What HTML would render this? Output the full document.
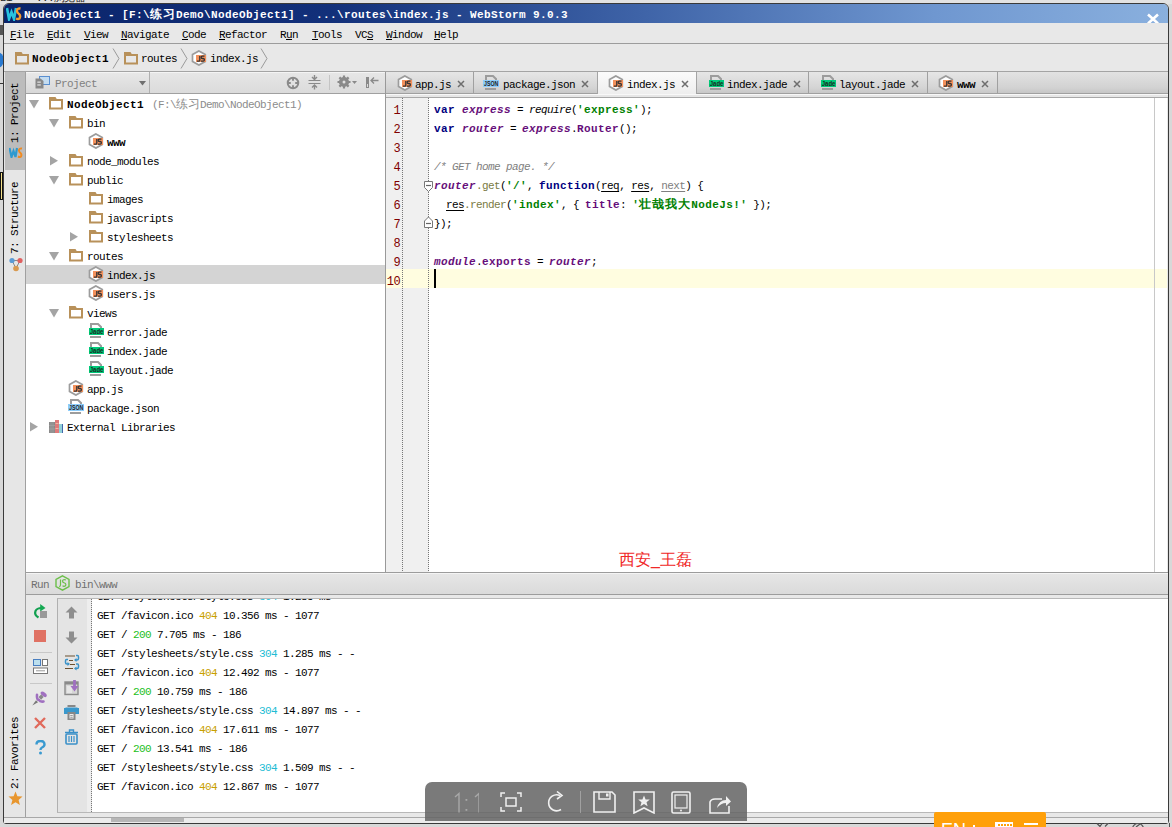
<!DOCTYPE html>
<html><head><meta charset="utf-8">
<style>
*{box-sizing:border-box;margin:0;padding:0}
html,body{width:1172px;height:827px;overflow:hidden}
body{position:relative;background:#d8d8d8;font-family:"Liberation Mono",monospace;font-size:12px;color:#000}
.a{position:absolute}
.t{position:absolute;white-space:pre;font-size:11px;letter-spacing:-0.6px;line-height:12px}
.b{font-weight:bold;letter-spacing:0.4px}
.i{font-style:italic}
u{text-decoration:underline;text-underline-offset:1px}
</style></head><body>
<div class="a" style="left:0px;top:0px;width:1172px;height:4px;background:#e2e2e2"></div>
<div class="t" style="left:0px;top:-8px;color:#222">Bi    ...浏览器</div>
<div class="a" style="left:-10px;top:52px;width:14px;height:16px;border-radius:50%;background:#2a7ad0"></div>
<div class="a" style="left:0px;top:25px;width:3px;height:10px;background:#555"></div>
<div class="a" style="left:0px;top:172px;width:3px;height:28px;background:#f4e08a;border:1px solid #111"></div>
<div class="a" style="left:0px;top:83px;width:3px;height:1px;background:#333"></div>
<div class="a" style="left:3px;top:3px;width:1166px;height:821px;background:#e8e8e8;border:1px solid #3a3a3a;border-radius:6px 6px 3px 3px"></div>
<div class="a" style="left:4px;top:4px;width:1164px;height:19px;background:linear-gradient(90deg,#0a246a 0%,#12307a 28%,#3f64a8 55%,#6f97d0 80%,#8ab0de 100%);border-radius:5px 5px 0 0"></div>
<svg class="a" style="left:6px;top:6px;" width="16" height="15" viewBox="0 0 16 15"><path d="M1 2 L3 13 L5.5 6 L8 13 L10 2" fill="none" stroke="#27c3e0" stroke-width="2.6"/><path d="M14.5 2.5 Q11 2 11 5 Q11 7 13 8 Q15 9.5 13.5 12.5 Q12 13.5 10 12.5" fill="none" stroke="#f59b2e" stroke-width="2.4"/></svg>
<div class="t b" style="left:24px;top:9px;color:#fff">NodeObject1 - [F:\<span style="font-size:12px;letter-spacing:1px">练习</span>Demo\NodeObject1] - ...\routes\index.js - WebStorm 9.0.3</div>
<svg class="a" style="left:1146px;top:13px;" width="14" height="12" viewBox="0 0 14 12"><path d="M2 1.5 L12 10.5 M12 1.5 L2 10.5" stroke="#fff" stroke-width="2.6"/></svg>
<div class="a" style="left:4px;top:23px;width:1164px;height:21px;background:#e8e8e8;border-bottom:1px solid #9c9c9c"></div>
<div class="t" style="left:10px;top:29px;"><u>F</u>ile</div>
<div class="t" style="left:47px;top:29px;"><u>E</u>dit</div>
<div class="t" style="left:84px;top:29px;"><u>V</u>iew</div>
<div class="t" style="left:121px;top:29px;"><u>N</u>avigate</div>
<div class="t" style="left:182px;top:29px;"><u>C</u>ode</div>
<div class="t" style="left:219px;top:29px;"><u>R</u>efactor</div>
<div class="t" style="left:280px;top:29px;">R<u>u</u>n</div>
<div class="t" style="left:312px;top:29px;"><u>T</u>ools</div>
<div class="t" style="left:355px;top:29px;">VC<u>S</u></div>
<div class="t" style="left:386px;top:29px;"><u>W</u>indow</div>
<div class="t" style="left:434px;top:29px;"><u>H</u>elp</div>
<div class="a" style="left:4px;top:44px;width:1164px;height:28px;background:#e8e8e8;border-bottom:1px solid #a4a4a4"></div>
<svg class="a" style="left:15px;top:52px;" width="15" height="13" viewBox="0 0 15 13"><path d="M0 0 H6.5 L8 2.5 H0 Z" fill="#b8915a"/><rect x="1" y="3" width="12" height="8.5" fill="none" stroke="#b8915a" stroke-width="2"/></svg>
<div class="t b" style="left:32px;top:53px;">NodeObject1</div>
<svg class="a" style="left:112px;top:48px;" width="8" height="21" viewBox="0 0 8 21"><path d="M1 0.5 L7 10.5 L1 20.5" fill="none" stroke="#9a9a9a" stroke-width="1"/></svg>
<svg class="a" style="left:124px;top:52px;" width="15" height="13" viewBox="0 0 15 13"><path d="M0 0 H6.5 L8 2.5 H0 Z" fill="#b8915a"/><rect x="1" y="3" width="12" height="8.5" fill="none" stroke="#b8915a" stroke-width="2"/></svg>
<div class="t" style="left:141px;top:53px;">routes</div>
<svg class="a" style="left:180px;top:48px;" width="8" height="21" viewBox="0 0 8 21"><path d="M1 0.5 L7 10.5 L1 20.5" fill="none" stroke="#9a9a9a" stroke-width="1"/></svg>
<svg class="a" style="left:191px;top:50px;" width="16" height="16" viewBox="0 0 16 16"><path d="M7.9 0.9 L14.3 4.5 V11.5 L7.9 15.1 L1.5 11.5 V4.5 Z" fill="#fff" stroke="#9c9c9c" stroke-width="1.7"/><rect x="5" y="5" width="10" height="7" fill="#f3915c"/><path d="M8.8 6 V10.3 Q8.8 11.2 7.8 11.2 H6" fill="none" stroke="#333" stroke-width="1.3"/><path d="M13.5 6.2 H11.2 Q10.2 6.2 10.2 7.3 Q10.2 8.5 11.3 8.5 H12.2 Q13.4 8.5 13.4 9.8 Q13.4 11.1 12.2 11.1 H10" fill="none" stroke="#333" stroke-width="1.3"/></svg>
<div class="t" style="left:210px;top:53px;">index.js</div>
<svg class="a" style="left:260px;top:48px;" width="8" height="21" viewBox="0 0 8 21"><path d="M1 0.5 L7 10.5 L1 20.5" fill="none" stroke="#9a9a9a" stroke-width="1"/></svg>
<div class="a" style="left:4px;top:72px;width:22px;height:745px;background:#e6e6e6;border-right:1px solid #a0a0a0"></div>
<div class="a" style="left:5px;top:72px;width:20px;height:98px;background:#bcbcbc"></div>
<div class="t" style="left:9px;top:143px;font-size:11px;letter-spacing:-0.6px;transform-origin:0 0;transform:rotate(-90deg)">1: Project</div>
<svg class="a" style="left:9px;top:147px;" width="14" height="11" viewBox="0 0 14 11"><path d="M0.5 1 L2.5 10 L4.5 4 L6.5 10 L8 1" fill="none" stroke="#2e9ad0" stroke-width="2.2"/><path d="M13 1.5 Q10 1 10 3.5 Q10 5 11.5 6 Q13 7.2 12 9.5 Q11 10.5 9 9.5" fill="none" stroke="#f08a20" stroke-width="2"/></svg>
<div class="t" style="left:9px;top:254px;font-size:11px;letter-spacing:-0.6px;transform-origin:0 0;transform:rotate(-90deg)">7: Structure</div>
<svg class="a" style="left:9px;top:257px;" width="14" height="15" viewBox="0 0 14 15"><path d="M3 3.5 L11 3.5 L7 11.5 Z" fill="none" stroke="#888" stroke-width="1"/><circle cx="3" cy="3.5" r="2.6" fill="#5b9bd5"/><circle cx="11" cy="3.5" r="2.6" fill="#e06060"/><circle cx="7" cy="11.5" r="2.8" fill="#d99a50"/></svg>
<div class="t" style="left:9px;top:789px;font-size:11px;letter-spacing:-0.6px;transform-origin:0 0;transform:rotate(-90deg)">2: Favorites</div>
<svg class="a" style="left:8px;top:791px;" width="15" height="15" viewBox="0 0 15 15"><path d="M7.5 0.5 L9.4 5.3 L14.5 5.6 L10.6 8.9 L11.9 14 L7.5 11.2 L3.1 14 L4.4 8.9 L0.5 5.6 L5.6 5.3 Z" fill="#e8962e"/></svg>
<div class="a" style="left:26px;top:72px;width:360px;height:22px;background:linear-gradient(#f4f4f4 0 1px,#e6e6e6 1px,#dbdbdb);border-bottom:1px solid #a0a0a0"></div>
<div class="a" style="left:26px;top:72px;width:124px;height:21px;background:linear-gradient(#f4f4f4 0 1px,#e8e8e8 1px,#d8d8d8);border-right:1px solid #b0b0b0"></div>
<svg class="a" style="left:35px;top:76px;" width="16" height="13" viewBox="0 0 16 13"><rect x="4.5" y="0.5" width="10" height="8" fill="#c4dcf0" stroke="#5a8fd0" stroke-width="1"/><path d="M0.5 2.5 H5.5 L8.5 5 V12.5 H0.5 Z" fill="#888"/><rect x="2.3" y="5.5" width="3.5" height="1.3" fill="#ddd"/><rect x="2.3" y="8.3" width="3.5" height="1.3" fill="#ddd"/></svg>
<div class="t" style="left:55px;top:78px;color:#808080">Project</div>
<svg class="a" style="left:139px;top:81px;" width="8" height="5" viewBox="0 0 8 5"><path d="M0 0 H7 L3.5 4.5 Z" fill="#707070"/></svg>
<svg class="a" style="left:286px;top:76px;" width="14" height="14" viewBox="0 0 14 14"><circle cx="7" cy="7" r="5.3" fill="none" stroke="#8a8a8a" stroke-width="1.9"/><path d="M7 2 V4.8 M7 9.2 V12 M2 7 H4.8 M9.2 7 H12" stroke="#8a8a8a" stroke-width="1.9"/></svg>
<svg class="a" style="left:308px;top:75px;" width="13" height="15" viewBox="0 0 13 15"><path d="M0.5 5.5 H12.5 M0.5 8.5 H12.5" stroke="#8a8a8a" stroke-width="1.2"/><path d="M6.5 0 V4 M4 2 L6.5 4.5 L9 2 M6.5 14.5 V10 M4 12.5 L6.5 10 L9 12.5" fill="none" stroke="#8a8a8a" stroke-width="1.4"/></svg>
<div class="a" style="left:329px;top:75px;width:1px;height:15px;background:#c4c4c4"></div>
<svg class="a" style="left:337px;top:75px;" width="21" height="14" viewBox="0 0 21 14"><circle cx="7" cy="7" r="3.6" fill="none" stroke="#8a8a8a" stroke-width="3"/><path d="M7 0.5 V13.5 M0.5 7 H13.5 M2.4 2.4 L11.6 11.6 M11.6 2.4 L2.4 11.6" stroke="#8a8a8a" stroke-width="2.2"/><circle cx="7" cy="7" r="1.5" fill="#e0e0e0"/><path d="M15 6 H20 L17.5 9 Z" fill="#8a8a8a"/></svg>
<svg class="a" style="left:365px;top:76px;" width="14" height="13" viewBox="0 0 14 13"><rect x="1" y="1" width="3" height="11" fill="#8a8a8a"/><rect x="2" y="8" width="1" height="3" fill="#ddd"/><path d="M6 4.5 H13.5 M9 1.5 L6 4.5 L9 7.5" fill="none" stroke="#8a8a8a" stroke-width="1.3"/></svg>
<div class="a" style="left:26px;top:94px;width:359px;height:478px;background:#fff"></div>
<div class="a" style="left:385px;top:72px;width:1px;height:501px;background:#999"></div>
<div class="a" style="left:26px;top:265px;width:359px;height:19px;background:#d4d4d4"></div>
<svg class="a" style="left:29px;top:100px;" width="10" height="9" viewBox="0 0 10 9"><path d="M0 0 H10 L5 8.5 Z" fill="#a4a4a4"/></svg>
<svg class="a" style="left:49px;top:97px;" width="15" height="13" viewBox="0 0 15 13"><path d="M0 0 H6.5 L8 2.5 H0 Z" fill="#b8915a"/><rect x="1" y="3" width="12" height="8.5" fill="none" stroke="#b8915a" stroke-width="2"/></svg>
<div class="t b" style="left:67px;top:99px;">NodeObject1</div>
<div class="t" style="left:152px;top:99px;color:#8c8c8c">(F:\<span style="font-size:12px;letter-spacing:0px">练习</span>Demo\NodeObject1)</div>
<svg class="a" style="left:49px;top:119px;" width="10" height="9" viewBox="0 0 10 9"><path d="M0 0 H10 L5 8.5 Z" fill="#a4a4a4"/></svg>
<svg class="a" style="left:69px;top:116px;" width="15" height="13" viewBox="0 0 15 13"><path d="M0 0 H6.5 L8 2.5 H0 Z" fill="#b8915a"/><rect x="1" y="3" width="12" height="8.5" fill="none" stroke="#b8915a" stroke-width="2"/></svg>
<div class="t" style="left:87px;top:118px;">bin</div>
<svg class="a" style="left:88px;top:133px;" width="16" height="16" viewBox="0 0 16 16"><path d="M7.9 0.9 L14.3 4.5 V11.5 L7.9 15.1 L1.5 11.5 V4.5 Z" fill="#fff" stroke="#9c9c9c" stroke-width="1.7"/><rect x="5" y="5" width="10" height="7" fill="#f3915c"/><path d="M8.8 6 V10.3 Q8.8 11.2 7.8 11.2 H6" fill="none" stroke="#333" stroke-width="1.3"/><path d="M13.5 6.2 H11.2 Q10.2 6.2 10.2 7.3 Q10.2 8.5 11.3 8.5 H12.2 Q13.4 8.5 13.4 9.8 Q13.4 11.1 12.2 11.1 H10" fill="none" stroke="#333" stroke-width="1.3"/></svg>
<div class="t b" style="left:107px;top:137px;letter-spacing:-0.6px">www</div>
<svg class="a" style="left:50px;top:156px;" width="9" height="10" viewBox="0 0 9 10"><path d="M0 0 V9.5 L8 4.75 Z" fill="#a4a4a4"/></svg>
<svg class="a" style="left:69px;top:154px;" width="15" height="13" viewBox="0 0 15 13"><path d="M0 0 H6.5 L8 2.5 H0 Z" fill="#b8915a"/><rect x="1" y="3" width="12" height="8.5" fill="none" stroke="#b8915a" stroke-width="2"/></svg>
<div class="t" style="left:87px;top:156px;">node_modules</div>
<svg class="a" style="left:49px;top:176px;" width="10" height="9" viewBox="0 0 10 9"><path d="M0 0 H10 L5 8.5 Z" fill="#a4a4a4"/></svg>
<svg class="a" style="left:69px;top:173px;" width="15" height="13" viewBox="0 0 15 13"><path d="M0 0 H6.5 L8 2.5 H0 Z" fill="#b8915a"/><rect x="1" y="3" width="12" height="8.5" fill="none" stroke="#b8915a" stroke-width="2"/></svg>
<div class="t" style="left:87px;top:175px;">public</div>
<svg class="a" style="left:89px;top:192px;" width="15" height="13" viewBox="0 0 15 13"><path d="M0 0 H6.5 L8 2.5 H0 Z" fill="#b8915a"/><rect x="1" y="3" width="12" height="8.5" fill="none" stroke="#b8915a" stroke-width="2"/></svg>
<div class="t" style="left:107px;top:194px;">images</div>
<svg class="a" style="left:89px;top:211px;" width="15" height="13" viewBox="0 0 15 13"><path d="M0 0 H6.5 L8 2.5 H0 Z" fill="#b8915a"/><rect x="1" y="3" width="12" height="8.5" fill="none" stroke="#b8915a" stroke-width="2"/></svg>
<div class="t" style="left:107px;top:213px;">javascripts</div>
<svg class="a" style="left:70px;top:232px;" width="9" height="10" viewBox="0 0 9 10"><path d="M0 0 V9.5 L8 4.75 Z" fill="#a4a4a4"/></svg>
<svg class="a" style="left:89px;top:230px;" width="15" height="13" viewBox="0 0 15 13"><path d="M0 0 H6.5 L8 2.5 H0 Z" fill="#b8915a"/><rect x="1" y="3" width="12" height="8.5" fill="none" stroke="#b8915a" stroke-width="2"/></svg>
<div class="t" style="left:107px;top:232px;">stylesheets</div>
<svg class="a" style="left:49px;top:252px;" width="10" height="9" viewBox="0 0 10 9"><path d="M0 0 H10 L5 8.5 Z" fill="#a4a4a4"/></svg>
<svg class="a" style="left:69px;top:249px;" width="15" height="13" viewBox="0 0 15 13"><path d="M0 0 H6.5 L8 2.5 H0 Z" fill="#b8915a"/><rect x="1" y="3" width="12" height="8.5" fill="none" stroke="#b8915a" stroke-width="2"/></svg>
<div class="t" style="left:87px;top:251px;">routes</div>
<svg class="a" style="left:88px;top:266px;" width="16" height="16" viewBox="0 0 16 16"><path d="M7.9 0.9 L14.3 4.5 V11.5 L7.9 15.1 L1.5 11.5 V4.5 Z" fill="#fff" stroke="#9c9c9c" stroke-width="1.7"/><rect x="5" y="5" width="10" height="7" fill="#f3915c"/><path d="M8.8 6 V10.3 Q8.8 11.2 7.8 11.2 H6" fill="none" stroke="#333" stroke-width="1.3"/><path d="M13.5 6.2 H11.2 Q10.2 6.2 10.2 7.3 Q10.2 8.5 11.3 8.5 H12.2 Q13.4 8.5 13.4 9.8 Q13.4 11.1 12.2 11.1 H10" fill="none" stroke="#333" stroke-width="1.3"/></svg>
<div class="t" style="left:107px;top:270px;">index.js</div>
<svg class="a" style="left:88px;top:285px;" width="16" height="16" viewBox="0 0 16 16"><path d="M7.9 0.9 L14.3 4.5 V11.5 L7.9 15.1 L1.5 11.5 V4.5 Z" fill="#fff" stroke="#9c9c9c" stroke-width="1.7"/><rect x="5" y="5" width="10" height="7" fill="#f3915c"/><path d="M8.8 6 V10.3 Q8.8 11.2 7.8 11.2 H6" fill="none" stroke="#333" stroke-width="1.3"/><path d="M13.5 6.2 H11.2 Q10.2 6.2 10.2 7.3 Q10.2 8.5 11.3 8.5 H12.2 Q13.4 8.5 13.4 9.8 Q13.4 11.1 12.2 11.1 H10" fill="none" stroke="#333" stroke-width="1.3"/></svg>
<div class="t" style="left:107px;top:289px;">users.js</div>
<svg class="a" style="left:49px;top:309px;" width="10" height="9" viewBox="0 0 10 9"><path d="M0 0 H10 L5 8.5 Z" fill="#a4a4a4"/></svg>
<svg class="a" style="left:69px;top:306px;" width="15" height="13" viewBox="0 0 15 13"><path d="M0 0 H6.5 L8 2.5 H0 Z" fill="#b8915a"/><rect x="1" y="3" width="12" height="8.5" fill="none" stroke="#b8915a" stroke-width="2"/></svg>
<div class="t" style="left:87px;top:308px;">views</div>
<svg class="a" style="left:89px;top:323px;" width="16" height="16" viewBox="0 0 16 16"><path d="M2 5 V1 H9 L12 4 V5" fill="none" stroke="#9c9c9c" stroke-width="2"/><path d="M1 14 H12" fill="none" stroke="#9c9c9c" stroke-width="2"/><rect x="0" y="5" width="15" height="7" fill="#00c97a"/><text x="0.8" y="11.4" font-size="7.8" font-family="Liberation Sans" font-weight="bold" fill="#1a2a20" textLength="13.6" lengthAdjust="spacingAndGlyphs">Jade</text></svg>
<div class="t" style="left:107px;top:327px;">error.jade</div>
<svg class="a" style="left:89px;top:342px;" width="16" height="16" viewBox="0 0 16 16"><path d="M2 5 V1 H9 L12 4 V5" fill="none" stroke="#9c9c9c" stroke-width="2"/><path d="M1 14 H12" fill="none" stroke="#9c9c9c" stroke-width="2"/><rect x="0" y="5" width="15" height="7" fill="#00c97a"/><text x="0.8" y="11.4" font-size="7.8" font-family="Liberation Sans" font-weight="bold" fill="#1a2a20" textLength="13.6" lengthAdjust="spacingAndGlyphs">Jade</text></svg>
<div class="t" style="left:107px;top:346px;">index.jade</div>
<svg class="a" style="left:89px;top:361px;" width="16" height="16" viewBox="0 0 16 16"><path d="M2 5 V1 H9 L12 4 V5" fill="none" stroke="#9c9c9c" stroke-width="2"/><path d="M1 14 H12" fill="none" stroke="#9c9c9c" stroke-width="2"/><rect x="0" y="5" width="15" height="7" fill="#00c97a"/><text x="0.8" y="11.4" font-size="7.8" font-family="Liberation Sans" font-weight="bold" fill="#1a2a20" textLength="13.6" lengthAdjust="spacingAndGlyphs">Jade</text></svg>
<div class="t" style="left:107px;top:365px;">layout.jade</div>
<svg class="a" style="left:68px;top:380px;" width="16" height="16" viewBox="0 0 16 16"><path d="M7.9 0.9 L14.3 4.5 V11.5 L7.9 15.1 L1.5 11.5 V4.5 Z" fill="#fff" stroke="#9c9c9c" stroke-width="1.7"/><rect x="5" y="5" width="10" height="7" fill="#f3915c"/><path d="M8.8 6 V10.3 Q8.8 11.2 7.8 11.2 H6" fill="none" stroke="#333" stroke-width="1.3"/><path d="M13.5 6.2 H11.2 Q10.2 6.2 10.2 7.3 Q10.2 8.5 11.3 8.5 H12.2 Q13.4 8.5 13.4 9.8 Q13.4 11.1 12.2 11.1 H10" fill="none" stroke="#333" stroke-width="1.3"/></svg>
<div class="t" style="left:87px;top:384px;">app.js</div>
<svg class="a" style="left:68px;top:399px;" width="17" height="16" viewBox="0 0 17 16"><path d="M3 5 V1 H10 L13 4 V5" fill="none" stroke="#9c9c9c" stroke-width="2"/><path d="M2 14 H13" fill="none" stroke="#9c9c9c" stroke-width="2"/><rect x="0" y="5" width="16" height="7" fill="#8dcdfb"/><text x="1" y="11.4" font-size="7.8" font-family="Liberation Sans" font-weight="bold" fill="#222" textLength="14.2" lengthAdjust="spacingAndGlyphs">JSON</text></svg>
<div class="t" style="left:87px;top:403px;">package.json</div>
<svg class="a" style="left:30px;top:422px;" width="9" height="10" viewBox="0 0 9 10"><path d="M0 0 V9.5 L8 4.75 Z" fill="#a4a4a4"/></svg>
<svg class="a" style="left:49px;top:420px;" width="15" height="14" viewBox="0 0 15 14"><rect x="0" y="2" width="6" height="11" fill="#8a8a8a"/><path d="M0 5.5 H6 M0 9 H6 M2 2 V13 M4 2 V13" stroke="#a8a8a8" stroke-width="0.6"/><rect x="6" y="0" width="4" height="13" fill="#e07a7a"/><path d="M6.5 3.5 H9.5 M6.5 8.5 H9.5" stroke="#f0c8b0" stroke-width="0.8"/><rect x="10" y="4" width="4" height="9" fill="#8fcfd8"/><rect x="13" y="4" width="1" height="9" fill="#4466aa"/></svg>
<div class="t" style="left:67px;top:422px;">External Libraries</div>
<div class="a" style="left:386px;top:72px;width:782px;height:22px;background:linear-gradient(#e2e2e2,#d2d2d2 75%,#c6c6c6);border-bottom:1px solid #a0a0a0"></div>
<div class="a" style="left:386px;top:72px;width:88px;height:22px;background:linear-gradient(#e6e6e6,#d4d4d4 75%,#c8c8c8);border-right:1px solid #a0a0a0;border-bottom:1px solid #a0a0a0"></div>
<svg class="a" style="left:397px;top:75px;" width="16" height="16" viewBox="0 0 16 16"><path d="M7.9 0.9 L14.3 4.5 V11.5 L7.9 15.1 L1.5 11.5 V4.5 Z" fill="#fff" stroke="#9c9c9c" stroke-width="1.7"/><rect x="5" y="5" width="10" height="7" fill="#f3915c"/><path d="M8.8 6 V10.3 Q8.8 11.2 7.8 11.2 H6" fill="none" stroke="#333" stroke-width="1.3"/><path d="M13.5 6.2 H11.2 Q10.2 6.2 10.2 7.3 Q10.2 8.5 11.3 8.5 H12.2 Q13.4 8.5 13.4 9.8 Q13.4 11.1 12.2 11.1 H10" fill="none" stroke="#333" stroke-width="1.3"/></svg>
<div class="t" style="left:415px;top:79px;">app.js</div>
<svg class="a" style="left:457px;top:80px;" width="8" height="8" viewBox="0 0 8 8"><path d="M1 1 L7 7 M7 1 L1 7" stroke="#6e6e6e" stroke-width="1.5"/></svg>
<div class="a" style="left:474px;top:72px;width:124px;height:22px;background:linear-gradient(#e6e6e6,#d4d4d4 75%,#c8c8c8);border-right:1px solid #a0a0a0;border-bottom:1px solid #a0a0a0"></div>
<svg class="a" style="left:483px;top:75px;" width="17" height="16" viewBox="0 0 17 16"><path d="M3 5 V1 H10 L13 4 V5" fill="none" stroke="#9c9c9c" stroke-width="2"/><path d="M2 14 H13" fill="none" stroke="#9c9c9c" stroke-width="2"/><rect x="0" y="5" width="16" height="7" fill="#8dcdfb"/><text x="1" y="11.4" font-size="7.8" font-family="Liberation Sans" font-weight="bold" fill="#222" textLength="14.2" lengthAdjust="spacingAndGlyphs">JSON</text></svg>
<div class="t" style="left:503px;top:79px;">package.json</div>
<svg class="a" style="left:581px;top:80px;" width="8" height="8" viewBox="0 0 8 8"><path d="M1 1 L7 7 M7 1 L1 7" stroke="#6e6e6e" stroke-width="1.5"/></svg>
<div class="a" style="left:597px;top:72px;width:100px;height:25px;background:linear-gradient(#fbfbfb,#ececec);border-left:1px solid #a4a4a4;border-right:1px solid #a4a4a4"></div>
<svg class="a" style="left:608px;top:75px;" width="16" height="16" viewBox="0 0 16 16"><path d="M7.9 0.9 L14.3 4.5 V11.5 L7.9 15.1 L1.5 11.5 V4.5 Z" fill="#fff" stroke="#9c9c9c" stroke-width="1.7"/><rect x="5" y="5" width="10" height="7" fill="#f3915c"/><path d="M8.8 6 V10.3 Q8.8 11.2 7.8 11.2 H6" fill="none" stroke="#333" stroke-width="1.3"/><path d="M13.5 6.2 H11.2 Q10.2 6.2 10.2 7.3 Q10.2 8.5 11.3 8.5 H12.2 Q13.4 8.5 13.4 9.8 Q13.4 11.1 12.2 11.1 H10" fill="none" stroke="#333" stroke-width="1.3"/></svg>
<div class="t" style="left:627px;top:79px;">index.js</div>
<svg class="a" style="left:681px;top:80px;" width="8" height="8" viewBox="0 0 8 8"><path d="M1 1 L7 7 M7 1 L1 7" stroke="#6e6e6e" stroke-width="1.5"/></svg>
<div class="a" style="left:697px;top:72px;width:112px;height:22px;background:linear-gradient(#e6e6e6,#d4d4d4 75%,#c8c8c8);border-right:1px solid #a0a0a0;border-bottom:1px solid #a0a0a0"></div>
<svg class="a" style="left:709px;top:75px;" width="16" height="16" viewBox="0 0 16 16"><path d="M2 5 V1 H9 L12 4 V5" fill="none" stroke="#9c9c9c" stroke-width="2"/><path d="M1 14 H12" fill="none" stroke="#9c9c9c" stroke-width="2"/><rect x="0" y="5" width="15" height="7" fill="#00c97a"/><text x="0.8" y="11.4" font-size="7.8" font-family="Liberation Sans" font-weight="bold" fill="#1a2a20" textLength="13.6" lengthAdjust="spacingAndGlyphs">Jade</text></svg>
<div class="t" style="left:727px;top:79px;">index.jade</div>
<svg class="a" style="left:793px;top:80px;" width="8" height="8" viewBox="0 0 8 8"><path d="M1 1 L7 7 M7 1 L1 7" stroke="#6e6e6e" stroke-width="1.5"/></svg>
<div class="a" style="left:809px;top:72px;width:119px;height:22px;background:linear-gradient(#e6e6e6,#d4d4d4 75%,#c8c8c8);border-right:1px solid #a0a0a0;border-bottom:1px solid #a0a0a0"></div>
<svg class="a" style="left:821px;top:75px;" width="16" height="16" viewBox="0 0 16 16"><path d="M2 5 V1 H9 L12 4 V5" fill="none" stroke="#9c9c9c" stroke-width="2"/><path d="M1 14 H12" fill="none" stroke="#9c9c9c" stroke-width="2"/><rect x="0" y="5" width="15" height="7" fill="#00c97a"/><text x="0.8" y="11.4" font-size="7.8" font-family="Liberation Sans" font-weight="bold" fill="#1a2a20" textLength="13.6" lengthAdjust="spacingAndGlyphs">Jade</text></svg>
<div class="t" style="left:839px;top:79px;">layout.jade</div>
<svg class="a" style="left:911px;top:80px;" width="8" height="8" viewBox="0 0 8 8"><path d="M1 1 L7 7 M7 1 L1 7" stroke="#6e6e6e" stroke-width="1.5"/></svg>
<div class="a" style="left:928px;top:72px;width:70px;height:22px;background:linear-gradient(#e6e6e6,#d4d4d4 75%,#c8c8c8);border-right:1px solid #a0a0a0;border-bottom:1px solid #a0a0a0"></div>
<svg class="a" style="left:938px;top:75px;" width="16" height="16" viewBox="0 0 16 16"><path d="M7.9 0.9 L14.3 4.5 V11.5 L7.9 15.1 L1.5 11.5 V4.5 Z" fill="#fff" stroke="#9c9c9c" stroke-width="1.7"/><rect x="5" y="5" width="10" height="7" fill="#f3915c"/><path d="M8.8 6 V10.3 Q8.8 11.2 7.8 11.2 H6" fill="none" stroke="#333" stroke-width="1.3"/><path d="M13.5 6.2 H11.2 Q10.2 6.2 10.2 7.3 Q10.2 8.5 11.3 8.5 H12.2 Q13.4 8.5 13.4 9.8 Q13.4 11.1 12.2 11.1 H10" fill="none" stroke="#333" stroke-width="1.3"/></svg>
<div class="t b" style="left:957px;top:79px;letter-spacing:-0.6px">www</div>
<svg class="a" style="left:981px;top:80px;" width="8" height="8" viewBox="0 0 8 8"><path d="M1 1 L7 7 M7 1 L1 7" stroke="#6e6e6e" stroke-width="1.5"/></svg>
<div class="a" style="left:386px;top:94px;width:782px;height:3px;background:linear-gradient(#f8f8f8 0 1px,#e6e6e6 1px)"></div>
<div class="a" style="left:386px;top:97px;width:782px;height:1px;background:#a8a8a8"></div>
<div class="a" style="left:386px;top:98px;width:781px;height:474px;background:#fff"></div>
<div class="a" style="left:386px;top:98px;width:43px;height:474px;background:#f0f0f0"></div>
<div class="a" style="left:386px;top:269px;width:781px;height:19px;background:#fffde0"></div>
<div class="a" style="left:402px;top:98px;width:1px;height:474px;background:repeating-linear-gradient(#777 0 1px,transparent 1px 2px)"></div>
<div class="a" style="left:428px;top:98px;width:1px;height:474px;background:repeating-linear-gradient(#777 0 1px,transparent 1px 2px)"></div>
<div class="a" style="left:1154px;top:98px;width:1px;height:474px;background:#c8c8c8"></div>
<div class="t" style="left:380px;top:105px;width:20px;text-align:right;color:#800000;font-size:12px;letter-spacing:-0.6px">1</div>
<div class="t" style="left:380px;top:124px;width:20px;text-align:right;color:#800000;font-size:12px;letter-spacing:-0.6px">2</div>
<div class="t" style="left:380px;top:143px;width:20px;text-align:right;color:#800000;font-size:12px;letter-spacing:-0.6px">3</div>
<div class="t" style="left:380px;top:162px;width:20px;text-align:right;color:#800000;font-size:12px;letter-spacing:-0.6px">4</div>
<div class="t" style="left:380px;top:181px;width:20px;text-align:right;color:#800000;font-size:12px;letter-spacing:-0.6px">5</div>
<div class="t" style="left:380px;top:200px;width:20px;text-align:right;color:#800000;font-size:12px;letter-spacing:-0.6px">6</div>
<div class="t" style="left:380px;top:219px;width:20px;text-align:right;color:#800000;font-size:12px;letter-spacing:-0.6px">7</div>
<div class="t" style="left:380px;top:238px;width:20px;text-align:right;color:#800000;font-size:12px;letter-spacing:-0.6px">8</div>
<div class="t" style="left:380px;top:257px;width:20px;text-align:right;color:#800000;font-size:12px;letter-spacing:-0.6px">9</div>
<div class="t" style="left:380px;top:276px;width:20px;text-align:right;color:#800000;font-size:12px;letter-spacing:-0.6px">10</div>
<div class="a" style="left:434px;top:269px;width:2px;height:19px;background:#000"></div>
<svg class="a" style="left:424px;top:181px;" width="10" height="12" viewBox="0 0 10 12"><path d="M0.5 0.5 H8.5 V6.5 L4.5 10.5 L0.5 6.5 Z" fill="#fff" stroke="#777"/><path d="M2 4.5 H7" stroke="#666" stroke-width="1.2"/></svg>
<svg class="a" style="left:424px;top:216px;" width="10" height="13" viewBox="0 0 10 13"><path d="M0.5 11.5 H8.5 V5 L4.5 1 L0.5 5 Z" fill="#fff" stroke="#777"/><path d="M2 7.5 H7" stroke="#666" stroke-width="1.2"/></svg>
<div class="t" style="left:434px;top:104px"><span style="color:#000080;font-weight:bold;letter-spacing:0.4px;">var </span><span style="color:#660e7a;font-weight:bold;letter-spacing:0.4px;font-style:italic;">express</span><span style=""> = </span><span style="font-style:italic;">require</span><span style="">(</span><span style="color:#008000;font-weight:bold;letter-spacing:0.4px;">'express'</span><span style="">);</span></div>
<div class="t" style="left:434px;top:123px"><span style="color:#000080;font-weight:bold;letter-spacing:0.4px;">var </span><span style="color:#660e7a;font-weight:bold;letter-spacing:0.4px;font-style:italic;">router</span><span style=""> = </span><span style="color:#660e7a;font-weight:bold;letter-spacing:0.4px;font-style:italic;">express</span><span style="">.</span><span style="color:#660e7a;font-weight:bold;letter-spacing:0.4px;">Router</span><span style="">();</span></div>
<div class="t" style="left:434px;top:161px"><span style="color:#808080;font-style:italic;">/* GET home page. */</span></div>
<div class="t" style="left:434px;top:180px"><span style="color:#660e7a;font-weight:bold;letter-spacing:0.4px;font-style:italic;">router</span><span style="color:#7a7a43;">.get</span><span style="">(</span><span style="color:#008000;font-weight:bold;letter-spacing:0.4px;">'/'</span><span style="">, </span><span style="color:#000080;font-weight:bold;letter-spacing:0.4px;">function</span><span style="">(</span><span style="text-decoration:underline;text-underline-offset:2px;">req</span><span style="">, </span><span style="text-decoration:underline;text-underline-offset:2px;">res</span><span style="">, </span><span style="color:#808080;text-decoration:underline;text-underline-offset:2px;">next</span><span style="">) {</span></div>
<div class="t" style="left:434px;top:199px"><span style="">  </span><span style="text-decoration:underline;text-underline-offset:2px;">res</span><span style="color:#7a7a43;">.render</span><span style="">(</span><span style="color:#008000;font-weight:bold;letter-spacing:0.4px;">'index'</span><span style="">, { </span><span style="color:#660e7a;font-weight:bold;letter-spacing:0.4px;">title</span><span style="">: </span><span style="color:#008000;font-weight:bold;letter-spacing:0.4px;">'</span><span style="color:#008000;font-weight:bold;letter-spacing:0.4px;letter-spacing:1px;font-size:12px;">壮哉我大</span><span style="color:#008000;font-weight:bold;letter-spacing:0.4px;">NodeJs!'</span><span style=""> });</span></div>
<div class="t" style="left:434px;top:218px"><span style="">});</span></div>
<div class="t" style="left:434px;top:256px"><span style="color:#660e7a;font-weight:bold;letter-spacing:0.4px;font-style:italic;">module</span><span style="">.</span><span style="color:#660e7a;font-weight:bold;letter-spacing:0.4px;">exports</span><span style=""> = </span><span style="color:#660e7a;font-weight:bold;letter-spacing:0.4px;font-style:italic;">router</span><span style="">;</span></div>
<div class="a" style="left:619px;top:550px;font-family:'Liberation Sans',sans-serif;font-size:16px;line-height:20px;color:#f02828;white-space:pre">西安_王磊</div>
<div class="a" style="left:26px;top:572px;width:1142px;height:23px;background:linear-gradient(#f4f4f4 0 1px,#e6e6e6 1px,#dadada);border-top:1px solid #9c9c9c;border-bottom:1px solid #9c9c9c"></div>
<div class="t" style="left:31px;top:579px;color:#707070">Run</div>
<svg class="a" style="left:55px;top:575px;" width="15" height="16" viewBox="0 0 15 16"><path d="M7.5 0.8 L14 4.5 V11.5 L7.5 15.2 L1 11.5 V4.5 Z" fill="none" stroke="#6cbf4a" stroke-width="1.4"/><path d="M5.5 4.5 V10 Q5.5 11.5 4 11.5" fill="none" stroke="#6cbf4a" stroke-width="1.2"/><path d="M11 5 Q8 4 7.5 6 Q7.5 7.5 9.5 8 Q11.5 8.8 10.5 10.8 Q9 11.8 7.5 10.8" fill="none" stroke="#6cbf4a" stroke-width="1.2"/></svg>
<div class="t" style="left:75px;top:579px;color:#707070">bin\www</div>
<div class="a" style="left:26px;top:595px;width:1142px;height:222px;background:#e8e8e8"></div>
<div class="a" style="left:57px;top:598px;width:1111px;height:215px;background:#e4e4e4;border-left:1px solid #b0b0b0;border-top:1px solid #b8b8b8;border-bottom:1px solid #b8b8b8"></div>
<div class="a" style="left:87px;top:599px;width:4px;height:213px;background:#eeeeee"></div>
<div class="a" style="left:92px;top:599px;width:1076px;height:213px;background:#fff"></div>
<div class="a" style="left:91px;top:599px;width:1px;height:213px;background:repeating-linear-gradient(#777 0 1px,transparent 1px 2px)"></div>
<div class="a" style="left:92px;top:599px;width:1076px;height:213px;overflow:hidden">
<div class="t" style="left:5px;top:-8px">GET /stylesheets/style.css <span style="color:#22bcd4">304</span> 1.285 ms - -</div>
<div class="t" style="left:5px;top:11px">GET /favicon.ico <span style="color:#c8a000">404</span> 10.356 ms - 1077</div>
<div class="t" style="left:5px;top:30px">GET / <span style="color:#22c022">200</span> 7.705 ms - 186</div>
<div class="t" style="left:5px;top:49px">GET /stylesheets/style.css <span style="color:#22bcd4">304</span> 1.285 ms - -</div>
<div class="t" style="left:5px;top:68px">GET /favicon.ico <span style="color:#c8a000">404</span> 12.492 ms - 1077</div>
<div class="t" style="left:5px;top:87px">GET / <span style="color:#22c022">200</span> 10.759 ms - 186</div>
<div class="t" style="left:5px;top:106px">GET /stylesheets/style.css <span style="color:#22bcd4">304</span> 14.897 ms - -</div>
<div class="t" style="left:5px;top:125px">GET /favicon.ico <span style="color:#c8a000">404</span> 17.611 ms - 1077</div>
<div class="t" style="left:5px;top:144px">GET / <span style="color:#22c022">200</span> 13.541 ms - 186</div>
<div class="t" style="left:5px;top:163px">GET /stylesheets/style.css <span style="color:#22bcd4">304</span> 1.509 ms - -</div>
<div class="t" style="left:5px;top:182px">GET /favicon.ico <span style="color:#c8a000">404</span> 12.867 ms - 1077</div>
</div>
<svg class="a" style="left:32px;top:603px;" width="16" height="16" viewBox="0 0 16 16"><path d="M9.5 5 Q5 5 3.5 8 Q2 12 6.5 14.5" fill="none" stroke="#12a050" stroke-width="2.2"/><path d="M8.2 1 L13.5 5 L8.2 8.6 Z" fill="#14a852"/><rect x="8" y="8" width="7" height="7" fill="#999"/></svg>
<div class="a" style="left:34px;top:630px;width:12px;height:12px;background:#e07264"></div>
<div class="a" style="left:30px;top:652px;width:22px;height:1px;background:#c8c8c8"></div>
<svg class="a" style="left:33px;top:659px;" width="15" height="15" viewBox="0 0 15 15"><rect x="0.5" y="0.5" width="7" height="6" fill="#bde0ee" stroke="#4a7fc0"/><rect x="9.5" y="0.5" width="5" height="6" fill="#fff" stroke="#777"/><rect x="0.5" y="9" width="14" height="5.5" fill="#fff" stroke="#777"/><path d="M3 11.8 H12" stroke="#999"/></svg>
<div class="a" style="left:30px;top:683px;width:22px;height:1px;background:#c8c8c8"></div>
<svg class="a" style="left:32px;top:690px;" width="16" height="16" viewBox="0 0 16 16"><path d="M0.3 15.5 L4 10.3 L6 12.3 Z" fill="#777"/><path d="M5 4.8 Q4.5 9.5 7 10 Q8 12 11.5 11.5" fill="none" stroke="#a070c0" stroke-width="2.6" stroke-linecap="round"/><ellipse cx="11.7" cy="4.3" rx="3.6" ry="1.9" transform="rotate(40 11.7 4.3)" fill="#a070c0"/><rect x="7.3" y="5.3" width="3.6" height="3.6" transform="rotate(45 9.1 7.1)" fill="#888"/></svg>
<svg class="a" style="left:34px;top:717px;" width="12" height="12" viewBox="0 0 12 12"><path d="M1 1 L11 11 M11 1 L1 11" stroke="#e06a5c" stroke-width="2.4"/></svg>
<svg class="a" style="left:35px;top:740px;" width="11" height="15" viewBox="0 0 11 15"><path d="M1.5 4.5 Q1.5 1 5.5 1 Q9.5 1 9.5 4.3 Q9.5 6.5 7 7.5 Q5.5 8.2 5.5 10" fill="none" stroke="#3a9ad0" stroke-width="2.4"/><circle cx="5.5" cy="13" r="1.5" fill="#3a9ad0"/></svg>
<svg class="a" style="left:65px;top:606px;" width="13" height="13" viewBox="0 0 13 13"><path d="M6.5 0.5 L12.5 6.5 H9 V12.5 H4 V6.5 H0.5 Z" fill="#8e8e8e"/></svg>
<svg class="a" style="left:65px;top:631px;" width="13" height="13" viewBox="0 0 13 13"><path d="M6.5 12.5 L12.5 6.5 H9 V0.5 H4 V6.5 H0.5 Z" fill="#8e8e8e"/></svg>
<svg class="a" style="left:64px;top:654px;" width="16" height="17" viewBox="0 0 16 17"><path d="M1 2 H11 M5 6.5 H9 M6 10.5 H11 M1 14.5 H9" stroke="#6a5030" stroke-width="1.1"/><path d="M12 1.5 H13.5 Q14.5 1.5 14.5 3 V4.5 Q14.5 6 13 6 H11.5" fill="none" stroke="#3a92c8" stroke-width="1.5"/><path d="M12.5 4 L10 6 L12.5 8 Z" fill="#3a92c8"/><path d="M4 5.5 H2.5 Q1.5 5.5 1.5 7 V8.5 Q1.5 10 3 10 H4.5" fill="none" stroke="#3a92c8" stroke-width="1.5"/><path d="M3.5 8 L6 10 L3.5 12 Z" fill="#3a92c8"/><path d="M12 10 H13.5 Q14.5 10 14.5 11.5 V13 Q14.5 14.5 13 14.5 H11.5" fill="none" stroke="#3a92c8" stroke-width="1.5"/><path d="M12.5 12.5 L10 14.5 L12.5 16.5 Z" fill="#3a92c8"/></svg>
<svg class="a" style="left:64px;top:680px;" width="16" height="16" viewBox="0 0 16 16"><rect x="1" y="2" width="13" height="12.5" fill="#d6d6d6" stroke="#8a8a8a" stroke-width="1.4"/><rect x="1" y="2" width="13" height="2.5" fill="#8a8a8a"/><path d="M3 6 H8 V13 H3 Z" fill="#e6e6e6"/><path d="M10.5 0 V7" stroke="#a070c0" stroke-width="2.8"/><path d="M6.5 6 H14.5 L10.5 11.5 Z" fill="#a070c0"/></svg>
<svg class="a" style="left:64px;top:704px;" width="16" height="17" viewBox="0 0 16 17"><rect x="3.5" y="1" width="8" height="2" fill="#888"/><rect x="0" y="4" width="15" height="6" fill="#3a98cc"/><rect x="1.5" y="3.5" width="12" height="1.5" fill="#3a98cc"/><rect x="3.5" y="8" width="8" height="8" fill="#888"/><rect x="5.5" y="10" width="4" height="4.5" fill="#eee"/><path d="M6.3 11.5 H8.7 M6.3 13.3 H8.7" stroke="#888" stroke-width="0.8"/></svg>
<svg class="a" style="left:64px;top:729px;" width="15" height="16" viewBox="0 0 15 16"><path d="M1 3.5 H14 M5.5 3 V1 H9.5 V3" fill="none" stroke="#3a90c8" stroke-width="1.4"/><rect x="2" y="5" width="11" height="10" rx="1" fill="none" stroke="#3a90c8" stroke-width="1.6"/><path d="M5 7 V13 M7.5 7 V13 M10 7 V13" stroke="#3a90c8" stroke-width="1.2"/></svg>
<div class="a" style="left:4px;top:817px;width:1164px;height:1px;background:#a8a8a8"></div>
<div class="a" style="left:4px;top:818px;width:1164px;height:5px;background:#ececec"></div>
<div class="a" style="left:111px;top:818px;width:73px;height:4px;background:#b6b6b6"></div>
<div class="a" style="left:425px;top:782px;width:322px;height:39px;background:rgba(100,100,100,0.86);border-radius:7px 7px 0 0"></div>
<svg class="a" style="left:453px;top:792px;" width="26" height="22" viewBox="0 0 26 22"><path d="M2 5 L6 1.5 V20.5 M22 5 L26 1.5 V20.5" fill="none" stroke="#a8a8a8" stroke-width="1.4"/><rect x="12.5" y="7" width="1.8" height="1.8" fill="#a8a8a8"/><rect x="12.5" y="17" width="1.8" height="1.8" fill="#a8a8a8"/></svg>
<svg class="a" style="left:500px;top:792px;" width="23" height="21" viewBox="0 0 23 21"><path d="M1 5 V1 H5 M17 1 H21 V5 M21 15 V19 H17 M5 19 H1 V15" fill="none" stroke="#f0f0f0" stroke-width="1.5"/><rect x="6" y="6" width="10" height="8" fill="none" stroke="#f0f0f0" stroke-width="1.5"/></svg>
<svg class="a" style="left:546px;top:791px;" width="22" height="22" viewBox="0 0 22 22"><path d="M14 4.5 A8 8 0 1 0 15 18.5" fill="none" stroke="#f0f0f0" stroke-width="1.6"/><path d="M11 0.5 L16 4.5 L11 8" fill="none" stroke="#f0f0f0" stroke-width="1.6"/></svg>
<div class="a" style="left:580px;top:791px;width:1px;height:22px;background:rgba(200,200,200,0.5)"></div>
<svg class="a" style="left:593px;top:791px;" width="23" height="22" viewBox="0 0 23 22"><path d="M1 1 H19 L22 4 V21 H1 Z" fill="none" stroke="#f0f0f0" stroke-width="1.6"/><path d="M6 1 V8 H17 V1" fill="none" stroke="#f0f0f0" stroke-width="1.4"/><rect x="13" y="2.5" width="2.5" height="3" fill="#f0f0f0"/></svg>
<svg class="a" style="left:633px;top:791px;" width="22" height="23" viewBox="0 0 22 23"><path d="M1 1 H21 V22 L11 17 L1 22 Z" fill="none" stroke="#f0f0f0" stroke-width="1.6"/><path d="M11 4.5 L12.6 8.5 L16.8 8.6 L13.5 11.2 L14.6 15.2 L11 12.9 L7.4 15.2 L8.5 11.2 L5.2 8.6 L9.4 8.5 Z" fill="#f0f0f0"/></svg>
<svg class="a" style="left:671px;top:791px;" width="20" height="23" viewBox="0 0 20 23"><rect x="1" y="1" width="18" height="21" rx="1.5" fill="none" stroke="#f0f0f0" stroke-width="1.6"/><rect x="4" y="4" width="12" height="13" fill="none" stroke="#f0f0f0" stroke-width="1.2"/><circle cx="10" cy="19.5" r="1" fill="#f0f0f0"/></svg>
<svg class="a" style="left:709px;top:793px;" width="23" height="21" viewBox="0 0 23 21"><path d="M13 6 H6 Q2 6 1 9 V20 H20 V13" fill="none" stroke="#f0f0f0" stroke-width="1.6"/><path d="M8 15 Q10 7 17 7 V3 L22 8.5 L17 13 V10 Q12 10 8 15 Z" fill="#f0f0f0"/></svg>
<svg class="a" style="left:1096px;top:823px;" width="14" height="4" viewBox="0 0 14 4"><path d="M1 0.5 L4 3.5 L6 0.5 M8 0.5 H12 L9 3.5" fill="none" stroke="#555" stroke-width="1.2"/></svg>
<svg class="a" style="left:1131px;top:823px;" width="14" height="4" viewBox="0 0 14 4"><circle cx="7" cy="6" r="5.5" fill="none" stroke="#555" stroke-width="1.2"/><path d="M5 4 L9 1" stroke="#555" stroke-width="1.2"/></svg>
<div class="a" style="left:1169px;top:823px;width:1px;height:4px;background:#555"></div>
<div class="a" style="left:934px;top:812px;width:112px;height:20px;background:#ffa00a;border-radius:2px"></div>
<div class="a" style="left:941px;top:820px;font-family:'Liberation Sans',sans-serif;font-size:18px;line-height:20px;color:#fff">EN</div>
<div class="a" style="left:973px;top:825px;width:2px;height:2px;background:#fff"></div>
<div class="a" style="left:995px;top:822px;width:18px;height:5px;background:#fff"></div>
<div class="a" style="left:998px;top:824px;width:2px;height:2px;background:#ffa00a"></div>
<div class="a" style="left:1001px;top:824px;width:2px;height:2px;background:#ffa00a"></div>
<div class="a" style="left:1004px;top:824px;width:2px;height:2px;background:#ffa00a"></div>
<div class="a" style="left:1007px;top:824px;width:2px;height:2px;background:#ffa00a"></div>
<div class="a" style="left:1010px;top:824px;width:2px;height:2px;background:#ffa00a"></div>
<div class="a" style="left:1024px;top:823px;width:14px;height:2px;background:#fff"></div>
</body></html>
